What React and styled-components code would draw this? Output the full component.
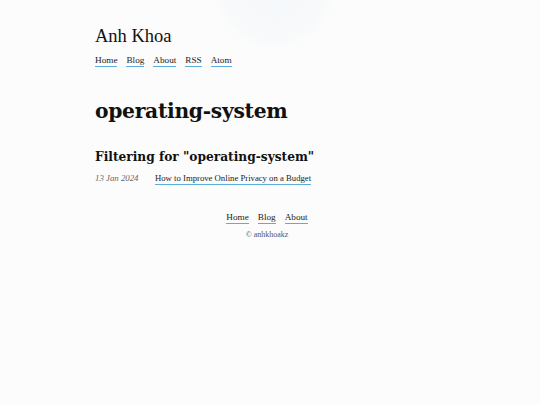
import React from 'react';
import styled, { createGlobalStyle } from 'styled-components';

const GlobalStyle = createGlobalStyle`
    html, body {
        margin: 0;
        padding: 0;
    }
    body {
        background: #fcfcfc;
        color: #111;
        font-family: Georgia, "DejaVu Serif", "Liberation Serif", serif;
        min-height: 405px;
    }
`

const Page = styled.div`
    position: relative;
    min-height: 405px;
    overflow: hidden;
`

const Glow = styled.div`
    position: absolute;
    left: 212px;
    top: -75px;
    width: 125px;
    height: 125px;
    border-radius: 50%;
    background: radial-gradient(circle, #f5f8fa 0%, #f7f9fa 55%, rgba(252,252,252,0) 72%);
    pointer-events: none;
`

const Container = styled.div`
    position: relative;
    width: 350px;
    padding-top: 25px;
    margin-left: 95px;
`

const Title = styled.div`
    font-family: "Liberation Serif", serif;
    font-size: 18.5px;
    line-height: 22px;
    color: #111;
`

const Nav = styled.nav`
    display: flex;
    gap: 9px;
    margin-top: 8px;
    justify-content: ${props => props.center ? 'center' : 'flex-start'};
`

const Link = styled.a`
    font-family: "Liberation Serif", serif;
    font-size: ${props => props.size || 9.2}px;
    line-height: 11px;
    color: #222;
    text-decoration: none;
    border-bottom: 1.5px solid #5aaedf;
`

const Heading = styled.h1`
    font-family: "DejaVu Serif", serif;
    font-weight: bold;
    font-size: 20.3px;
    line-height: 26px;
    margin: 31px 0 0;
    letter-spacing: -0.3px;
`

const SubHeading = styled.h2`
    font-family: "DejaVu Serif", serif;
    font-weight: bold;
    font-size: 12.2px;
    line-height: 18px;
    margin: 24px 0 0;
`

const PostRow = styled.div`
    display: flex;
    align-items: baseline;
    margin-top: 7px;
`

const PostDate = styled.span`
    width: 60px;
    font-family: "Liberation Serif", serif;
    font-style: italic;
    font-size: 8.8px;
    color: #666;
`

const Footer = styled.footer`
    margin-top: 19px;
    display: flex;
    flex-direction: column;
    align-items: center;
    width: 344px;
    margin-left: 95px;
`

const Copy = styled.div`
    font-family: "Liberation Serif", serif;
    font-size: 8px;
    color: #555;
    margin-top: 6px;
`

const App = () =>
    <Page>
        <GlobalStyle />
        <Glow />
        <Container>
            <Title>Anh Khoa</Title>
            <Nav>
                <Link href="#">Home</Link>
                <Link href="#">Blog</Link>
                <Link href="#">About</Link>
                <Link href="#">RSS</Link>
                <Link href="#">Atom</Link>
            </Nav>
            <Heading>operating-system</Heading>
            <SubHeading>Filtering for "operating-system"</SubHeading>
            <PostRow>
                <PostDate>13 Jan 2024</PostDate>
                <Link href="#" size={8.7}>How to Improve Online Privacy on a Budget</Link>
            </PostRow>
        </Container>
        <Footer>
            <Nav center>
                <Link href="#">Home</Link>
                <Link href="#">Blog</Link>
                <Link href="#">About</Link>
            </Nav>
            <Copy>© anhkhoakz</Copy>
        </Footer>
    </Page>

export default App;
